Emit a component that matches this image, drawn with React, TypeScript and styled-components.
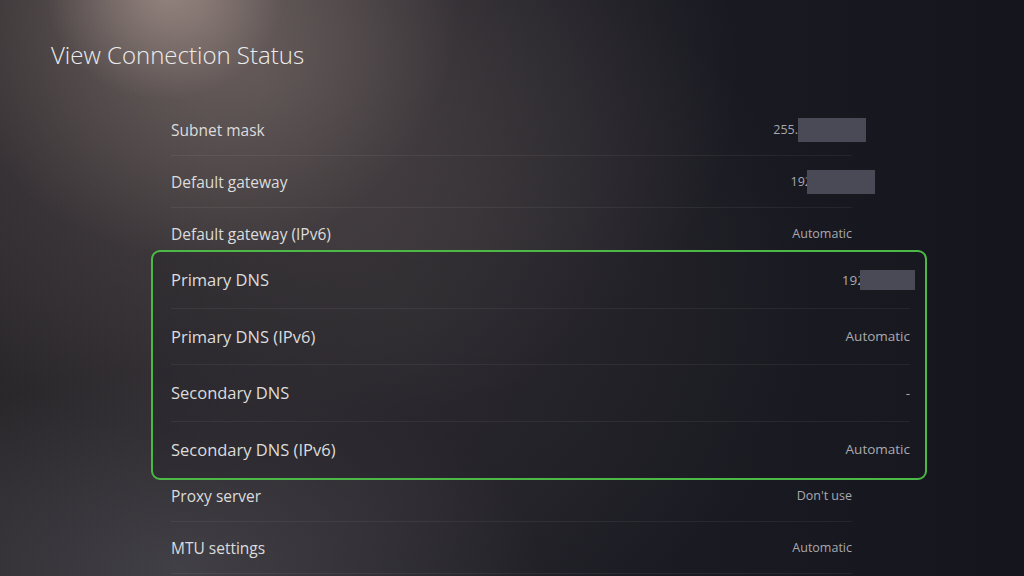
import React from "react";
import styled, { createGlobalStyle } from "styled-components";

const Global = createGlobalStyle`
  html, body { margin: 0; padding: 0; }
  body {
    width: 1024px;
    height: 576px;
    overflow: hidden;
    font-family: "Open Sans", "Noto Sans", "Liberation Sans", sans-serif;
    background: #15161e;
  }
`;

const Screen = styled.div`
  width: 1024px;
  height: 576px;
  overflow: hidden;
  box-sizing: border-box;
  padding: 38px 0 0 51px;
  background:
    radial-gradient(ellipse 120px 110px at 165px -10px, rgba(185, 165, 155, 0.55), rgba(185, 165, 155, 0) 100%),
    radial-gradient(ellipse 260px 260px at 200px 0px, rgba(150, 132, 126, 0.5), rgba(150, 132, 126, 0) 100%),
    radial-gradient(ellipse 480px 360px at 260px 80px, rgba(105, 94, 92, 0.5), rgba(105, 94, 92, 0) 100%),
    radial-gradient(ellipse 420px 360px at 400px 300px, rgba(70, 64, 66, 0.5), rgba(70, 64, 66, 0) 100%),
    radial-gradient(ellipse 360px 200px at 180px 570px, rgba(82, 82, 88, 0.6), rgba(82, 82, 88, 0) 100%),
    linear-gradient(90deg, #2a272b 0%, #25232a 30%, #1b1b23 60%, #14151d 100%);
`;

const Title = styled.h1`
  margin: 0;
  font-size: 24px;
  font-weight: 300;
  color: #ececec;
  line-height: 34px;
`;

const List = styled.div`
  width: 681px;
  margin: 32px 0 0 120px;
  display: flex;
  flex-direction: column;
`;

const Row = styled.div<{ $last?: boolean }>`
  height: 52px;
  display: flex;
  align-items: center;
  justify-content: space-between;
  border-bottom: 1px solid ${(p) => (p.$last ? "transparent" : "rgba(255,255,255,0.06)")};
  box-sizing: border-box;
`;

const Label = styled.span<{ $big?: boolean }>`
  color: #dcdcdc;
  font-size: ${(p) => (p.$big ? "16.5px" : "15.5px")};
  font-weight: 400;
`;

const Value = styled.span<{ $big?: boolean }>`
  display: flex;
  align-items: center;
  color: #a9a9ae;
  font-size: ${(p) => (p.$big ? "13.5px" : "12.5px")};
`;

const Redact = styled.span<{ $w: number; $h: number; $ml: number; $mr: number }>`
  display: inline-block;
  width: ${(p) => p.$w}px;
  height: ${(p) => p.$h}px;
  margin-left: ${(p) => p.$ml}px;
  margin-right: ${(p) => p.$mr}px;
  background: #4a4a56;
`;

const Focus = styled.div`
  position: relative;
  z-index: 1;
  margin: -10px -75px -10px -20px;
  padding: 0 15px 0 18px;
  border: 2px solid #4cb845;
  border-radius: 9px;
  background: rgba(30, 30, 36, 0.3);
  display: flex;
  flex-direction: column;
`;

const FocusRow = styled(Row)`
  height: 56.5px;
`;

type Item = { label: string; value?: string; redact?: { w: number; h: number; ml: number; mr: number } };

const before: Item[] = [
  { label: "Subnet mask", value: "255.", redact: { w: 68, h: 24, ml: 0, mr: -14 } },
  { label: "Default gateway", value: "192", redact: { w: 68, h: 24, ml: -5, mr: -23 } },
  { label: "Default gateway (IPv6)", value: "Automatic" },
];

const focused: Item[] = [
  { label: "Primary DNS", value: "192", redact: { w: 55, h: 20, ml: -5, mr: -5 } },
  { label: "Primary DNS (IPv6)", value: "Automatic" },
  { label: "Secondary DNS", value: "-" },
  { label: "Secondary DNS (IPv6)", value: "Automatic" },
];

const after: Item[] = [
  { label: "Proxy server", value: "Don't use" },
  { label: "MTU settings", value: "Automatic" },
];

const renderValue = (it: Item, big?: boolean) => (
  <Value $big={big}>
    {it.value}
    {it.redact && <Redact $w={it.redact.w} $h={it.redact.h} $ml={it.redact.ml} $mr={it.redact.mr} />}
  </Value>
);

export default function App() {
  return (
    <>
      <Global />
      <Screen>
        <Title>View Connection Status</Title>
        <List>
          {before.map((it, i) => (
            <Row key={it.label} $last={i === before.length - 1}>
              <Label>{it.label}</Label>
              {renderValue(it)}
            </Row>
          ))}
          <Focus>
            {focused.map((it, i) => (
              <FocusRow key={it.label} $last={i === focused.length - 1}>
                <Label $big>{it.label}</Label>
                {renderValue(it, true)}
              </FocusRow>
            ))}
          </Focus>
          {after.map((it) => (
            <Row key={it.label}>
              <Label>{it.label}</Label>
              {renderValue(it)}
            </Row>
          ))}
        </List>
      </Screen>
    </>
  );
}
